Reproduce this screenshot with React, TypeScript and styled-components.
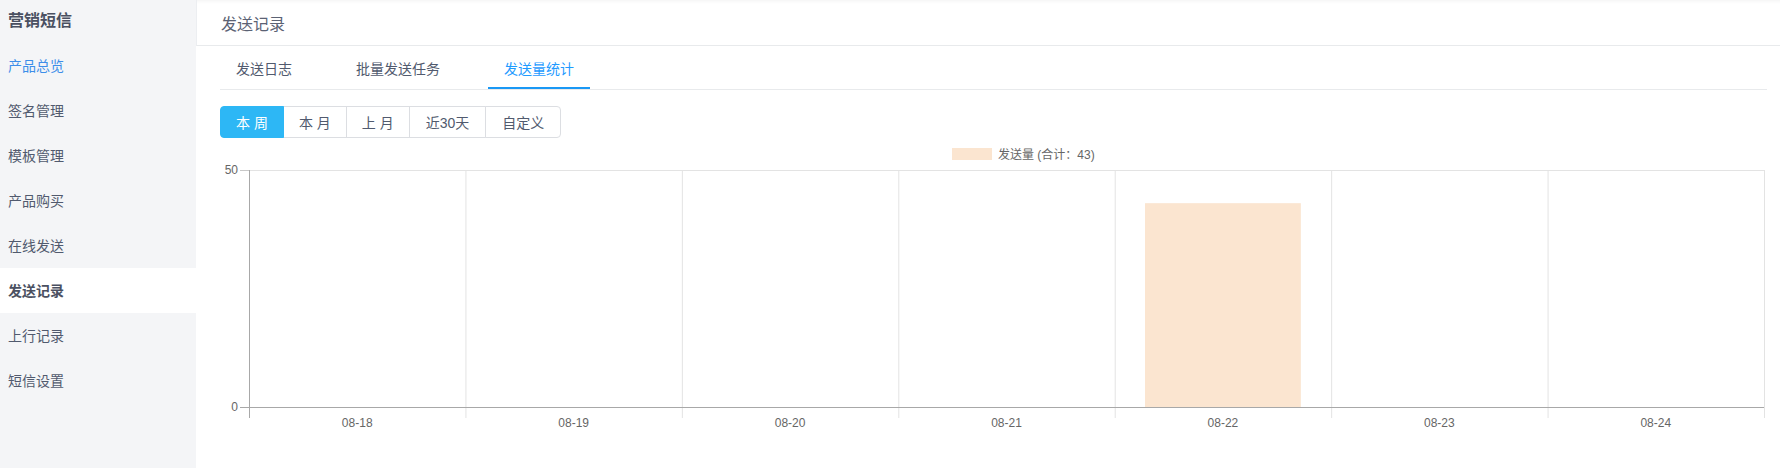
import React, { useState } from 'react';
import styled, { createGlobalStyle, css } from 'styled-components';

const GlobalStyle = createGlobalStyle`
  html, body {
    margin: 0;
    padding: 0;
    background: #fff;
    overflow: hidden;
  }
  body {
    font-family: "Liberation Sans", "Noto Sans CJK SC", sans-serif;
    color: #515a6e;
  }
`;

const Layout = styled.div`
  display: flex;
  height: 468px;
  width: 1780px;
`;

const Sider = styled.aside`
  width: 196px;
  flex: none;
  background: #f4f5f7;
  display: flex;
  flex-direction: column;
`;

const SiderTitle = styled.div`
  height: 43px;
  padding: 0 8px 5px;
  box-sizing: border-box;
  display: flex;
  align-items: center;
  font-size: 16px;
  font-weight: bold;
  color: #4a5061;
`;

const MenuItem = styled.div<{ $state?: 'current' | 'selected' }>`
  height: 45px;
  padding: 0 8px 2px;
  box-sizing: border-box;
  display: flex;
  align-items: center;
  font-size: 14px;
  color: #515a6e;
  cursor: pointer;
  ${(p) =>
    p.$state === 'current' &&
    css`
      color: #3d8ee9;
    `}
  ${(p) =>
    p.$state === 'selected' &&
    css`
      background: #fff;
      color: #4a5061;
      font-weight: bold;
    `}
`;

const Main = styled.main`
  flex: 1;
  display: flex;
  flex-direction: column;
  min-width: 0;
`;

const Header = styled.header`
  height: 45px;
  border-bottom: 1px solid #e8eaec;
  border-left: 1px solid #eceef1;
  box-shadow: inset 0 5px 5px -5px rgba(0, 0, 0, 0.08);
  display: flex;
  align-items: center;
  padding: 0 0 0 24px;
  font-size: 16px;
  color: #5b6274;
`;

const Content = styled.div`
  padding: 0 13px 0 24px;
  display: flex;
  flex-direction: column;
`;

const TabNav = styled.nav`
  display: flex;
  gap: 32px;
  border-bottom: 1px solid #e8eaec;
`;

const Tab = styled.div<{ $active?: boolean }>`
  position: relative;
  padding: 13px 16px 10px;
  line-height: 20px;
  font-size: 14px;
  color: ${(p) => (p.$active ? '#1f9bff' : '#515a6e')};
  cursor: pointer;
  &::after {
    content: '';
    position: absolute;
    left: 0;
    right: 0;
    bottom: 0;
    height: 2px;
    background: ${(p) => (p.$active ? '#1a98f5' : 'transparent')};
  }
`;

const BtnGroup = styled.div`
  display: flex;
  margin-top: 16px;
`;

const Btn = styled.button<{ $active?: boolean; $wide?: boolean }>`
  height: 32px;
  padding: 0 ${(p) => (p.$wide ? 16 : 15)}px;
  font-family: inherit;
  font-size: 14px;
  color: #515a6e;
  background: #fff;
  border: 1px solid #dcdee2;
  margin-left: -1px;
  cursor: pointer;
  white-space: pre;
  &:first-child {
    margin-left: 0;
    border-radius: 4px 0 0 4px;
  }
  &:last-child {
    border-radius: 0 4px 4px 0;
  }
  ${(p) =>
    p.$active &&
    css`
      background: #2db7f5;
      border-color: #2db7f5;
      color: #fff;
      position: relative;
    `}
`;

const ChartBox = styled.svg`
  display: block;
  font-family: "Liberation Sans", "Noto Sans CJK SC", sans-serif;
`;

const menu = ['产品总览', '签名管理', '模板管理', '产品购买', '在线发送', '发送记录', '上行记录', '短信设置'];
const tabs = ['发送日志', '批量发送任务', '发送量统计'];
const ranges = ['本 周', '本 月', '上 月', '近30天', '自定义'];
const days = [
  { label: '08-18', value: 0 },
  { label: '08-19', value: 0 },
  { label: '08-20', value: 0 },
  { label: '08-21', value: 0 },
  { label: '08-22', value: 43 },
  { label: '08-23', value: 0 },
  { label: '08-24', value: 0 },
];

const W = 1547;
const H = 330;
const left = 29;
const right = 1544;
const top = 32;
const bottom = 269;
const max = 50;

const Chart = () => {
  const col = (right - left) / days.length;
  const barW = col * 0.72;
  const total = days.reduce((s, d) => s + d.value, 0);
  return (
    <ChartBox width={W} height={H} viewBox={`0 0 ${W} ${H}`}>
      <rect x={732} y={10} width={40} height={12} fill="#fbe5d0" />
      <text x={778} y={21} fontSize={12} fill="#666">
        发送量 (合计：{total})
      </text>

      {days.map((d, i) => {
        const x = left + col * (i + 1);
        return (
          <line key={'g' + i} x1={x + 0.5} x2={x + 0.5} y1={top} y2={bottom + 11} stroke="#e3e3e3" />
        );
      })}
      <line x1={left - 9} x2={right} y1={top + 0.5} y2={top + 0.5} stroke="#e3e3e3" />
      <line x1={left - 9} x2={left} y1={top + 0.5} y2={top + 0.5} stroke="#c8c8c8" />

      {days.map((d, i) => {
        if (!d.value) return null;
        const h = ((bottom - top) * d.value) / max;
        return (
          <rect
            key={'b' + i}
            x={left + col * i + (col - barW) / 2}
            y={bottom - h}
            width={barW}
            height={h}
            fill="#fbe5d0"
          />
        );
      })}

      <line x1={left + 0.5} x2={left + 0.5} y1={top} y2={bottom + 11} stroke="#a8a8a8" />
      <line x1={left - 9} x2={right} y1={bottom + 0.5} y2={bottom + 0.5} stroke="#a8a8a8" />

      <text x={left - 11} y={top + 4} fontSize={12} fill="#666" textAnchor="end">
        50
      </text>
      <text x={left - 11} y={bottom + 4} fontSize={12} fill="#666" textAnchor="end">
        0
      </text>

      {days.map((d, i) => (
        <text key={'l' + i} x={left + col * (i + 0.5)} y={bottom + 20} fontSize={12} fill="#666" textAnchor="middle">
          {d.label}
        </text>
      ))}
    </ChartBox>
  );
};

export default function App() {
  const [tab, setTab] = useState(2);
  const [range, setRange] = useState(0);
  return (
    <Layout>
      <GlobalStyle />
      <Sider>
        <SiderTitle>营销短信</SiderTitle>
        {menu.map((m, i) => (
          <MenuItem key={m} $state={i === 0 ? 'current' : i === 5 ? 'selected' : undefined}>
            {m}
          </MenuItem>
        ))}
      </Sider>
      <Main>
        <Header>发送记录</Header>
        <Content>
          <TabNav>
            {tabs.map((t, i) => (
              <Tab key={t} $active={i === tab} onClick={() => setTab(i)}>
                {t}
              </Tab>
            ))}
          </TabNav>
          <BtnGroup>
            {ranges.map((r, i) => (
              <Btn key={r} $active={i === range} $wide={i >= 3} onClick={() => setRange(i)}>
                {r}
              </Btn>
            ))}
          </BtnGroup>
          <Chart />
        </Content>
      </Main>
    </Layout>
  );
}
